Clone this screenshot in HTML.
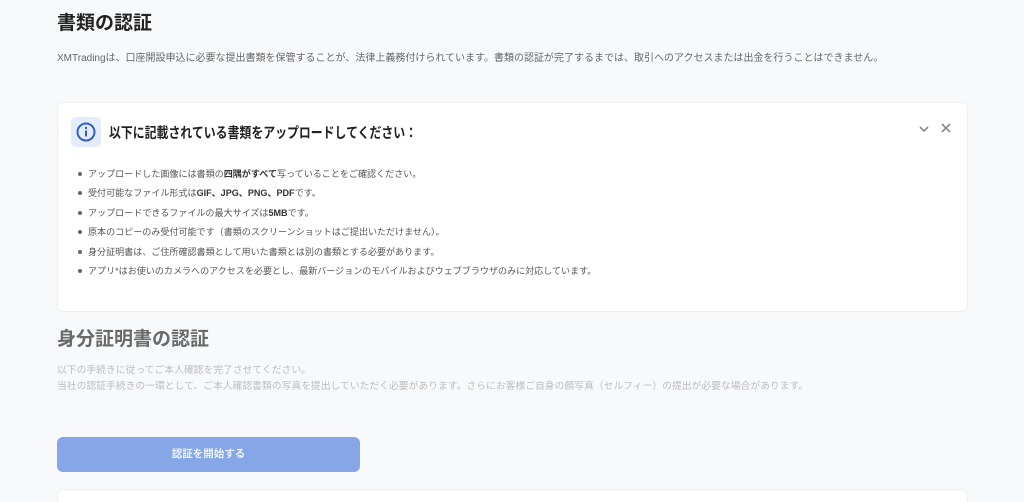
<!DOCTYPE html>
<html style="overflow:hidden;height:502px"><head><meta charset="utf-8"><style>
body{margin:0;width:1024px;height:502px;overflow:hidden;background:#f8f9fb;font-family:"Liberation Sans","Noto Sans CJK JP",sans-serif;position:relative}
.a{position:absolute;white-space:nowrap}
.card{position:absolute;left:57px;width:909px;background:#fff;border:1px solid #eceef2;border-radius:6px}
ul{margin:0;padding:0;list-style:none}
li{position:absolute;left:30px;font-size:9.05px;color:#555;white-space:nowrap}
li:before{content:"";position:absolute;left:-10px;top:5px;width:4px;height:4px;border-radius:50%;background:#666}
b{color:#333}
</style></head><body>
<div class="a" style="left:57px;top:8px;font-size:19px;font-weight:bold;color:#222">書類の認証</div>
<div class="a" style="left:57px;top:49px;font-size:10px;color:#666">XMTradingは、口座開設申込に必要な提出書類を保管することが、法律上義務付けられています。書類の認証が完了するまでは、取引へのアクセスまたは出金を行うことはできません。</div>
<div class="card" style="top:102px;height:208px">
 <div class="a" style="left:13px;top:14px;width:30px;height:30px;background:#e5ecf9;border-radius:5px">
  <svg width="30" height="30" viewBox="0 0 30 30"><circle cx="15" cy="15" r="8.5" fill="none" stroke="#2f5fc9" stroke-width="2"/><rect x="14" y="13.5" width="2" height="6" fill="#2f5fc9"/><circle cx="15" cy="11" r="1.2" fill="#2f5fc9"/></svg>
 </div>
 <div class="a" style="left:51px;top:19px;font-size:14.5px;font-weight:bold;color:#222;transform:scaleX(0.82);transform-origin:0 0">以下に記載されている書類をアップロードしてください：</div>
 <svg class="a" style="left:860px;top:21px" width="12" height="10"><path d="M2 3l4 4 4-4" fill="none" stroke="#888" stroke-width="1.6"/></svg>
 <svg class="a" style="left:882px;top:19px" width="12" height="12"><path d="M2 2l8 8M10 2l-8 8" fill="none" stroke="#888" stroke-width="1.6"/></svg>
 <ul>
 <li style="top:64px">アップロードした画像には書類の<b>四隅がすべて</b>写っていることをご確認ください。</li>
 <li style="top:83px">受付可能なファイル形式は<b>GIF、JPG、PNG、PDF</b>です。</li>
 <li style="top:103px">アップロードできるファイルの最大サイズは<b>5MB</b>です。</li>
 <li style="top:122px">原本のコピーのみ受付可能です（書類のスクリーンショットはご提出いただけません）。</li>
 <li style="top:142px">身分証明書は、ご住所確認書類として用いた書類とは別の書類とする必要があります。</li>
 <li style="top:161px">アプリ*はお使いのカメラへのアクセスを必要とし、最新バージョンのモバイルおよびウェブブラウザのみに対応しています。</li>
 </ul>
</div>
<div class="a" style="left:57px;top:324px;font-size:19px;font-weight:bold;color:#6a6a6a">身分証明書の認証</div>
<div class="a" style="left:57px;top:363px;font-size:9.8px;color:#bdbdbd;line-height:16px">以下の手続きに従ってご本人確認を完了させてください。<br>当社の認証手続きの一環として、ご本人確認書類の写真を提出していただく必要があります。さらにお客様ご自身の顔写真（セルフィー）の提出が必要な場合があります。</div>
<div class="a" style="left:57px;top:437px;width:303px;height:35px;background:#86a6e8;border-radius:6px;color:#eef3fd;font-size:10.5px;font-weight:bold;text-align:center;line-height:35px">認証を開始する</div>
<div class="card" style="top:489px;height:20px;border-bottom:none;border-radius:6px 6px 0 0"></div>
</body></html>
